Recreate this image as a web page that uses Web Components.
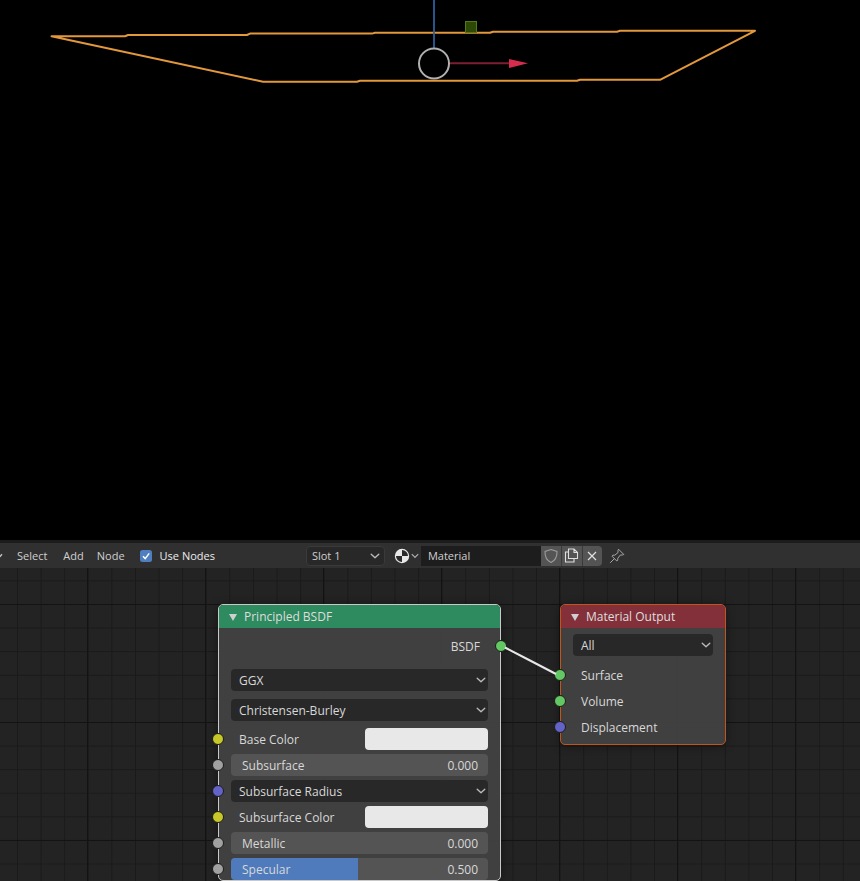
<!DOCTYPE html>
<html lang="en"><head><meta charset="utf-8"><title>Shader editor</title>
<style>
html,body{margin:0;padding:0;height:881px;overflow:hidden;background:#000}
body{font:12px "Open Sans","DejaVu Sans",sans-serif;color:#e0e0e0}
</style></head><body>
<b-app>
  <b-viewport></b-viewport>
  <b-header></b-header>
  <b-canvas>
    <b-node style="left:218px;top:36px;width:283px" label="Principled BSDF" tone="#2e8a5f" edge="#c9c9c9">
      <b-output label="BSDF" sock="#63c763"></b-output>
      <div style="height:8px"></div>
      <b-select label="GGX"></b-select>
      <div style="height:4px"></div>
      <b-select label="Christensen-Burley"></b-select>
      <div style="height:3px"></div>
      <b-color label="Base Color" sock="#c7c729"></b-color>
      <b-slider label="Subsurface" value="0.000" sock="#a1a1a1"></b-slider>
      <b-select label="Subsurface Radius" sock="#6363c7"></b-select>
      <b-color label="Subsurface Color" sock="#c7c729"></b-color>
      <b-slider label="Metallic" value="0.000" sock="#a1a1a1"></b-slider>
      <b-slider label="Specular" value="0.500" fill="49.5" sock="#a1a1a1"></b-slider>
    </b-node>
    <b-node style="left:560px;top:36px;width:166px" label="Material Output" tone="#83303a" edge="#c0561c">
      <b-select label="All" style="margin-top:-1px"></b-select>
      <b-input label="Surface" sock="#63c763" style="margin-top:4px"></b-input>
      <b-input label="Volume" sock="#63c763"></b-input>
      <b-input label="Displacement" sock="#6363c7"></b-input>
      <div style="height:6px"></div>
    </b-node>
  </b-canvas>
</b-app>
<script>
function def(name, css, html){
  customElements.define(name, class extends HTMLElement{
    connectedCallback(){
      if(this.shadowRoot) return;
      const r=this.attachShadow({mode:'open'});
      const g=a=>this.getAttribute(a)||'';
      r.innerHTML='<style>'+css+'</style>'+(typeof html==='function'?html(g):html);
    }
  });
}
const chev='<svg class="chev" width="10" height="6" viewBox="0 0 10 6"><path d="M1.2 1.2 5 4.8 8.8 1.2" fill="none" stroke="#bcbcbc" stroke-width="1.3" stroke-linecap="round" stroke-linejoin="round"/></svg>';
const sock=g=>g('sock')?`<span class="sock" style="background:${g('sock')}"></span>`:'';
const sockCss=`.sock{position:absolute;left:-19px;top:5px;width:10px;height:10px;border-radius:50%;border:1px solid #1c1c1c;box-sizing:content-box;z-index:3}`;
const rowText=`font-size:12px;color:#d8d8d8;`;

def('b-app',`:host{display:flex;flex-direction:column;width:860px;height:881px;overflow:hidden;background:#000}`,`<slot></slot>`);

def('b-viewport',`:host{display:block;height:540px;flex:none;background:#000}svg{display:block}`,
`<svg width="860" height="540" viewBox="0 0 860 540">
<path d="M51.5 36.2H125L128 35H247L250 33.6H372L375 32.8H490L493 31.7H617L620 30.8H755L660 79.8H580L577 80.8H360L357 81.7H263Z" fill="none" stroke="#e3983c" stroke-width="2" stroke-linejoin="round"/>
<rect x="465.5" y="21.5" width="11" height="11" fill="#2c4a06" stroke="#567a14"/>
<path d="M434 0V48" stroke="#2f5f9c" stroke-width="1.8"/>
<path d="M449 63.3H510" stroke="#7c1f33" stroke-width="2"/>
<path d="M509 59 528 63.3 509 68Z" fill="#d62d4e"/>
<circle cx="434" cy="63.5" r="15" fill="none" stroke="#b0b0b0" stroke-width="2"/>
</svg>`);

def('b-header',`:host{display:block;flex:none;height:28px;background:#303030;border-top:3px solid #1c1c1c;box-sizing:border-box;font-size:11px;color:#cfcfcf}
.bar{display:flex;align-items:center;height:25px;position:relative}
.sel{display:flex;align-items:center;justify-content:space-between;width:79px;height:20px;box-sizing:border-box;background:#282828;border:1px solid #3a3a3a;border-radius:4px;padding:0 4px 0 5px;margin-left:91px}
.mat{display:flex;align-items:center;height:20px;margin-left:6px;background:#3a3a3a;border-radius:4px;overflow:hidden}
.ic{display:flex;align-items:center;width:30px;height:20px;padding-left:3px;box-sizing:border-box;gap:1px;background:#2f2f2f}
.tx{width:120px;height:20px;line-height:20px;background:#1d1d1d;padding-left:7px;box-sizing:border-box}
.b{width:20px;height:20px;background:#545454;display:flex;align-items:center;justify-content:center}
.b+.b{border-left:1px solid #3a3a3a}
.b.l{width:19px}
.pin{margin-left:7px;display:flex}
.cb{width:12px;height:12px;background:#4f7ec1;border-radius:2.5px;display:flex;align-items:center;justify-content:center}
.lead{margin-left:-1px;width:4px;overflow:hidden;display:flex}
.chev{flex:none}`,
`<div class="bar">
<span class="lead"><svg width="8" height="6" viewBox="0 0 8 6" style="margin-left:-4px;flex:none"><path d="M1 1.2 4 4.6 7 1.2" fill="none" stroke="#c8c8c8" stroke-width="1.3"/></svg></span>
<span style="margin-left:14px">Select</span>
<span style="margin-left:16px">Add</span>
<span style="margin-left:13px">Node</span>
<span class="cb" style="margin-left:15px"><svg width="10" height="10" viewBox="0 0 10 10"><path d="M2 5.2 4.2 7.6 8.2 2.4" fill="none" stroke="#fff" stroke-width="1.5"/></svg></span>
<span style="margin-left:8px;color:#ececec">Use Nodes</span>
<span class="sel"><span>Slot 1</span>${chev}</span>
<span class="mat">
  <span class="ic"><svg width="16" height="16" viewBox="0 0 16 16"><circle cx="8" cy="8" r="7.2" fill="#e8e8e8"/><path d="M8 2A6 6 0 0 1 14 8H8ZM8 8V14A6 6 0 0 1 2 8Z" fill="#2a2a2a"/></svg><svg width="8" height="6" viewBox="0 0 8 6"><path d="M.8 1.2 4 4.4 7.2 1.2" fill="none" stroke="#b0b0b0" stroke-width="1.2"/></svg></span>
  <span class="tx">Material</span>
  <span class="b"><svg width="16" height="16" viewBox="0 0 16 16"><path d="M8 1.5 14 3.5C14.2 9 12 12.6 8 14.5 4 12.6 1.8 9 2 3.5Z" fill="none" stroke="#9c9c9c" stroke-width="1.1"/></svg></span>
  <span class="b"><svg width="17" height="17" viewBox="0 0 17 17"><path d="M5.5 11.5V2H11L14.5 5.5V11.5ZM11 2V5.5H14.5M5.5 5H2.5V15H11V11.5" fill="none" stroke="#dedede" stroke-width="1.1"/></svg></span>
  <span class="b l"><svg width="12" height="12" viewBox="0 0 12 12"><path d="M2 2 10 10M10 2 2 10" stroke="#e0e0e0" stroke-width="1.2"/></svg></span>
</span>
<span class="pin"><svg width="16" height="16" viewBox="0 0 16 16"><path d="M9.5 1.2 14.8 6.5 13.4 7 11.4 7 8.8 10.2 8.8 12.2 7.8 13 3 8.2 3.8 7.2 5.8 7.2 9 4.6 9 2.6ZM5.3 10.7 1.2 14.8" fill="none" stroke="#a8a8a8" stroke-width="1"/></svg></span>
</div>`);

def('b-canvas',`:host{display:block;position:relative;flex:1;overflow:hidden;background-color:#232323;
background-image:
linear-gradient(90deg,#131313 1px,transparent 1px),
linear-gradient(#131313 1px,transparent 1px),
linear-gradient(90deg,#1a1a1a 1px,transparent 1px),
linear-gradient(#1a1a1a 1px,transparent 1px);
background-size:118px 118px,118px 118px,23.6px 23.6px,23.6px 23.6px;
background-position:87px 36px,87px 36px,17px 12.4px,17px 12.4px}
svg{position:absolute;left:0;top:0;z-index:2;pointer-events:none}`,
`<slot></slot><svg width="860" height="313" viewBox="0 0 860 313"><path d="M505 79.5C525 90 535 95 556 106" fill="none" stroke="#e8e8e8" stroke-width="2"/></svg>`);

def('b-node',`:host{position:absolute;display:block;box-sizing:border-box;border:1px solid var(--e);border-radius:5px;background:rgba(66,66,66,.96);box-shadow:0 1px 10px rgba(0,0,0,.4);z-index:1}
.h{display:flex;align-items:center;height:23px;padding-left:10px;gap:7px;border-radius:4px 4px 0 0;background:var(--t);color:#dedede;font-size:12px}
.t{width:0;height:0;border-left:4px solid transparent;border-right:4px solid transparent;border-top:7px solid #cfcfcf;margin-top:2px}
.b{padding:7px 12px 0;display:flex;flex-direction:column;gap:4px}
::slotted(div){margin-top:-4px}`,
g=>`<style>:host{--e:${g('edge')};--t:${g('tone')}}</style><div class="h"><span class="t"></span><span style="margin-top:-1px">${g('label')}</span></div><div class="b"><slot></slot></div>`);

def('b-output',`:host{display:flex;position:relative;height:22px;justify-content:flex-end;align-items:center;padding-right:8px;${rowText}}
.sock{position:absolute;right:-19px;top:5px;width:10px;height:10px;border-radius:50%;border:1px solid #1c1c1c;z-index:3}`,
g=>`<span>${g('label')}</span>${sock(g)}`);

def('b-input',`:host{display:flex;position:relative;height:22px;align-items:center;padding-left:8px;${rowText}}${sockCss}`,
g=>`<span>${g('label')}</span>${sock(g)}`);

def('b-select',`:host{display:flex;position:relative;height:22px;align-items:center;justify-content:space-between;padding:0 2px 0 8px;background:#282828;border-radius:4px;box-sizing:border-box;${rowText}}${sockCss}`,
g=>`<span>${g('label')}</span>${chev}${sock(g)}`);

def('b-color',`:host{display:flex;position:relative;height:22px;align-items:center;justify-content:space-between;padding-left:8px;${rowText}}${sockCss}
.sw{width:123px;height:22px;background:#e8e8e8;border-radius:4px}`,
g=>`<span>${g('label')}</span><span class="sw"></span>${sock(g)}`);

def('b-slider',`:host{display:flex;position:relative;height:22px;align-items:center;justify-content:space-between;padding:0 10px 0 11px;background:#545454;border-radius:4px;box-sizing:border-box;${rowText}}${sockCss}
.f{position:absolute;left:0;top:0;bottom:0;background:#4f7bbd;border-radius:4px 0 0 4px}
span{position:relative}.sock{position:absolute}`,
g=>`${g('fill')?`<i class="f" style="width:${g('fill')}%"></i>`:''}<span>${g('label')}</span><span>${g('value')}</span>${sock(g)}`);
</script>
</body></html>
